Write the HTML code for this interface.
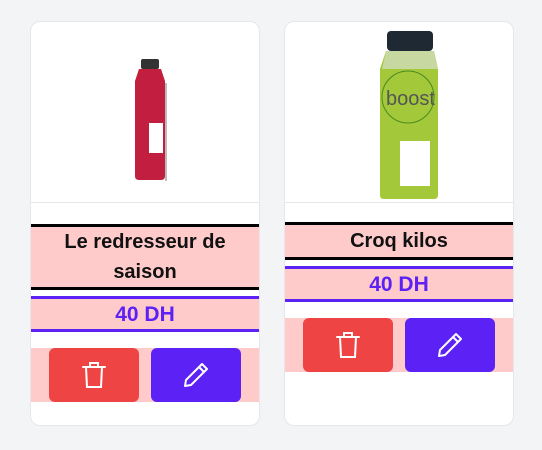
<!DOCTYPE html>
<html><head><style>
body{margin:0;width:542px;height:450px;background:#f3f4f6;font-family:"Liberation Sans",Arial,sans-serif;position:relative;overflow:hidden}
.card{position:absolute;top:21px;width:228px;height:403px;background:#fff;border:1px solid #e5e7eb;border-radius:10px;overflow:hidden}
.sep{position:absolute;left:0;right:0;top:180px;height:1px;background:#e5e7eb}
.bk{position:absolute;left:0;right:0;height:3px;background:#000}
.pu{position:absolute;left:0;right:0;height:3px;background:#5b21f5}
.pink{position:absolute;left:0;right:0;background:#fecaca;text-align:center}
.t{font-size:20px;font-weight:bold;color:#111;line-height:30px}
.p{font-size:21px;font-weight:bold;color:#5b21f5;line-height:31px}
.btn{position:absolute;top:0;width:90px;height:54px;border-radius:6px;display:flex;align-items:center;justify-content:center}
</style></head><body>
<div class="card" style="left:30px">
 <svg style="position:absolute;left:88px;top:36px" width="60" height="125" viewBox="0 0 60 125">
  <rect x="22" y="1" width="18" height="10" rx="2" fill="#333"/>
  <path d="M20 11h22l4 12v95q0 4-4 4h-22q-4 0-4-4v-95z" fill="#c21e3f"/>
  <rect x="30" y="65" width="14" height="30" fill="#fff"/>
  <path d="M47 25v98" stroke="#bbb" stroke-width="2"/>
 </svg>
 <div class="sep"></div>
 <div class="bk" style="top:202px"></div>
 <div class="pink t" style="top:205px;height:60px">Le redresseur de<br>saison</div>
 <div class="bk" style="top:265px"></div>
 <div class="pu" style="top:274px"></div>
 <div class="pink p" style="top:277px;height:31px">40 DH</div>
 <div class="pu" style="top:307px"></div>
 <div class="pink" style="top:326px;height:54px">
  <div class="btn" style="left:18px;background:#ef4444"><svg width="24" height="28" viewBox="0 0 24 28" fill="none" stroke="#fff" stroke-width="2" stroke-linecap="round"><path d="M1 6h22M8 6V2h8v4M4 6l1 20h14l1-20"/></svg></div>
  <div class="btn" style="left:120px;background:#5b21f5"><svg width="28" height="28" viewBox="0 0 28 28" fill="none" stroke="#fff" stroke-width="2" stroke-linejoin="round"><path d="M20 3l5 5L9 24l-6 1 1-6z M17 6l5 5"/></svg></div>
 </div>
</div>
<div class="card" style="left:284px">
 <svg style="position:absolute;left:85px;top:9px" width="70" height="172" viewBox="0 0 70 172">
  <rect x="17" y="0" width="46" height="20" rx="4" fill="#1f2933"/>
  <path d="M16 20h48l4 18v126q0 4-4 4h-50q-4 0-4-4v-126z" fill="#a3c83a"/>
  <path d="M16 20h48l4 18h-56z" fill="#c7d8a0"/>
  <circle cx="38" cy="66" r="26" fill="none" stroke="#4a8a20" stroke-width="1"/>
  <text x="16" y="74" font-size="20" fill="#555" font-family="Liberation Sans">boost</text>
  <rect x="30" y="110" width="30" height="45" fill="#fff"/>
 </svg>
 <div class="sep"></div>
 <div class="bk" style="top:200px"></div>
 <div class="pink t" style="top:203px;height:32px;line-height:32px">Croq kilos</div>
 <div class="bk" style="top:235px"></div>
 <div class="pu" style="top:244px"></div>
 <div class="pink p" style="top:247px;height:31px">40 DH</div>
 <div class="pu" style="top:277px"></div>
 <div class="pink" style="top:296px;height:54px">
  <div class="btn" style="left:18px;background:#ef4444"><svg width="24" height="28" viewBox="0 0 24 28" fill="none" stroke="#fff" stroke-width="2" stroke-linecap="round"><path d="M1 6h22M8 6V2h8v4M4 6l1 20h14l1-20"/></svg></div>
  <div class="btn" style="left:120px;background:#5b21f5"><svg width="28" height="28" viewBox="0 0 28 28" fill="none" stroke="#fff" stroke-width="2" stroke-linejoin="round"><path d="M20 3l5 5L9 24l-6 1 1-6z M17 6l5 5"/></svg></div>
 </div>
</div>
</body></html>
